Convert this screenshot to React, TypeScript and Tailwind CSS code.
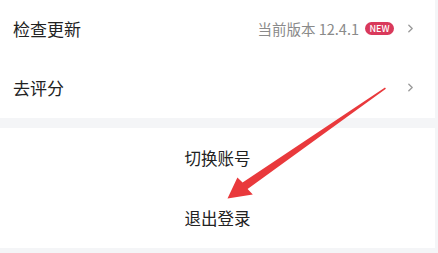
import React from "react";

const FONT = { fontFamily: '"Noto Sans CJK SC", "Noto Sans", sans-serif' };

const Chevron = () => (
  <svg viewBox="0 0 6 10" className="w-[5px] h-[9px] text-[#9a9a9a]" fill="none" stroke="currentColor" strokeWidth="1.6" strokeLinecap="round" strokeLinejoin="round">
    <path d="M1 1l4 4-4 4" />
  </svg>
);

// red annotation arrow drawn over the screenshot
const Arrow = () => (
  <svg className="absolute left-0 top-0 pointer-events-none" width="438" height="253" viewBox="0 0 438 253">
    <polygon
      points="385,87.6 385.9,88.8 247.6,189 252.8,194.4 227.5,198.5 237.4,177.4 242.6,182.6"
      fill="#e9393c"
    />
  </svg>
);

export default function App() {
  return (
    <div className="relative w-[438px] h-[253px] bg-[#f4f5f7] overflow-hidden" style={FONT}>
      <div className="w-[435px] bg-white">
        <div className="h-[57px] flex items-center justify-between pl-[13px] pr-[22px]">
          <span className="text-[17px] text-[#222]">检查更新</span>
          <div className="flex items-center">
            <span className="text-[14.5px] text-[#8a8a8a]">当前版本 12.4.1</span>
            <span className="ml-[6px] h-[13px] w-[29px] rounded-full bg-[#d9395b] text-white text-[9px] leading-[13px] text-center font-medium">
              NEW
            </span>
            <span className="ml-[14px] flex items-center">
              <Chevron />
            </span>
          </div>
        </div>
        <div className="h-[61px] flex items-center justify-between pl-[13px] pr-[22px]">
          <span className="text-[17px] text-[#222]">去评分</span>
          <Chevron />
        </div>
      </div>
      <div className="h-[10px]" />
      <div className="w-[435px] bg-white">
        <div className="h-[60px] flex items-center justify-center">
          <span className="text-[16.5px] text-[#222]">切换账号</span>
        </div>
        <div className="h-[60px] flex items-center justify-center">
          <span className="text-[16.5px] text-[#222]">退出登录</span>
        </div>
      </div>
      <Arrow />
    </div>
  );
}
